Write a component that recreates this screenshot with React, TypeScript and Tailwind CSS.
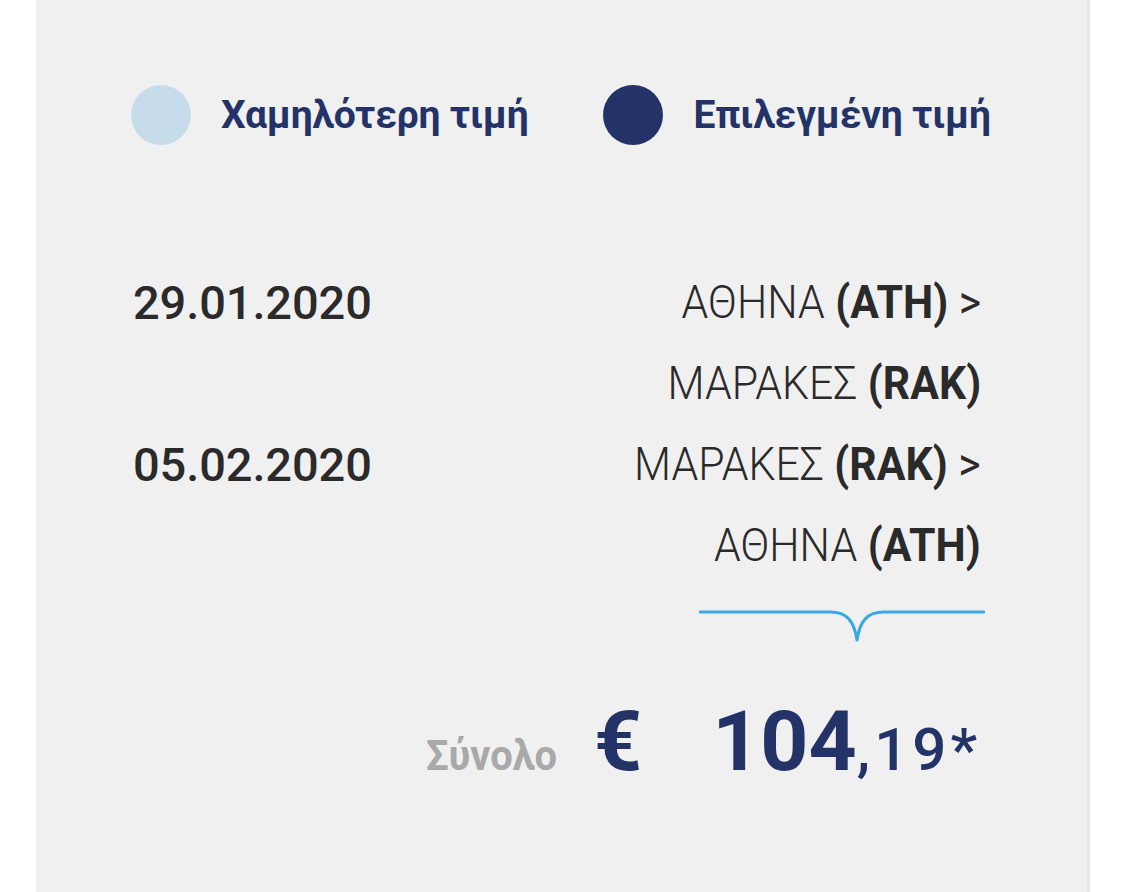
import React from "react";

const legs = [
  { date: "29.01.2020", from: ["ΑΘΗΝΑ", "ATH"], to: ["ΜΑΡΑΚΕΣ", "RAK"] },
  { date: "05.02.2020", from: ["ΜΑΡΑΚΕΣ", "RAK"], to: ["ΑΘΗΝΑ", "ATH"] },
];

function Legend({ dot, label }: { dot: string; label: string }) {
  return (
    <div className="flex shrink-0 items-center gap-[30px] whitespace-nowrap">
      <span className={`block h-[60px] w-[60px] shrink-0 rounded-full ${dot}`} />
      <span className="text-[39px] font-bold leading-none tracking-[-0.2px] text-[#233367]">{label}</span>
    </div>
  );
}

function Place({ name, code, arrow }: { name: string; code: string; arrow?: boolean }) {
  return (
    <div className="whitespace-nowrap">
      <span className="font-light">{name}</span> <span className="font-bold">({code})</span>
      {arrow && <span className="font-normal"> &gt;</span>}
    </div>
  );
}

export default function App() {
  return (
    <div className="h-[892px] w-[1125px] bg-white font-['Roboto',sans-serif]">
      <div className="ml-[36px] h-full w-[1054px] border-r-[3px] border-[#e6e6e6] bg-[#f0f0f0] pl-[95px] pr-[106px] pt-[85px]">
        <div className="flex items-center">
          <Legend dot="bg-[#c7dcea]" label="Χαμηλότερη τιμή" />
          <div className="ml-[75px] shrink-0">
            <Legend dot="bg-[#233367]" label="Επιλεγμένη τιμή" />
          </div>
        </div>

        <div className="mt-[117px] pl-[2px] text-[#2a2a2a]">
          {legs.map((leg) => (
            <div key={leg.date} className="flex justify-between leading-[81px]">
              <div className="text-[47px] font-medium tracking-[-0.1px]">{leg.date}</div>
              <div className="origin-right scale-x-[0.93] text-right text-[46px]">
                <Place name={leg.from[0]} code={leg.from[1]} arrow />
                <Place name={leg.to[0]} code={leg.to[1]} />
              </div>
            </div>
          ))}
        </div>

        <div className="-mr-[4px] mt-[21px] flex justify-end">
          <svg width="286" height="38" viewBox="0 0 286 38" fill="none">
            <path
              d="M1 5 H131 C148 5 155 14 158 33 C161 14 168 5 185 5 H285"
              stroke="#3aa9e1"
              strokeWidth="3"
              strokeLinecap="round"
              strokeLinejoin="round"
            />
          </svg>
        </div>

        <div className="mt-[55px] flex items-baseline justify-end whitespace-nowrap leading-none">
          <span className="origin-right scale-x-[0.95] text-[42px] font-bold text-[#a9a9a9]">Σύνολο</span>
          <span className="ml-[37px] text-[84px] font-bold text-[#233367]">€</span>
          <span className="ml-[70px] text-[84px] font-bold text-[#233367]">
            104<span className="text-[60px] font-medium tracking-[4px]">,19*</span>
          </span>
        </div>
      </div>
    </div>
  );
}
